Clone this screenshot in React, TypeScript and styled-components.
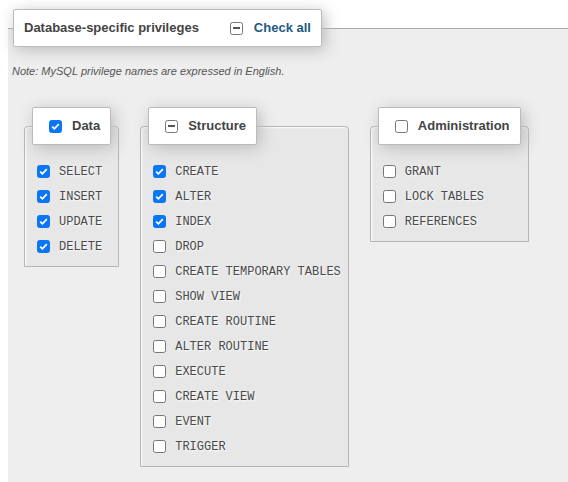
import React from "react";
import styled, { createGlobalStyle } from "styled-components";

type Mark = "on" | "off" | "mixed";

type Group = {
  title: string;
  mark: Mark;
  items: { name: string; on: boolean }[];
};

const groups: Group[] = [
  {
    title: "Data",
    mark: "on",
    items: ["SELECT", "INSERT", "UPDATE", "DELETE"].map((name) => ({ name, on: true })),
  },
  {
    title: "Structure",
    mark: "mixed",
    items: [
      "CREATE",
      "ALTER",
      "INDEX",
      "DROP",
      "CREATE TEMPORARY TABLES",
      "SHOW VIEW",
      "CREATE ROUTINE",
      "ALTER ROUTINE",
      "EXECUTE",
      "CREATE VIEW",
      "EVENT",
      "TRIGGER",
    ].map((name, i) => ({ name, on: i < 3 })),
  },
  {
    title: "Administration",
    mark: "off",
    items: ["GRANT", "LOCK TABLES", "REFERENCES"].map((name) => ({ name, on: false })),
  },
];

const GlobalStyle = createGlobalStyle`
  html, body {
    margin: 0;
    background: #fff;
    overflow: hidden;
  }
  body {
    font-family: "Liberation Sans", Arial, sans-serif;
  }
`;

const Check = ({ mark }: { mark: Mark }) => (
  <Box $mark={mark}>
    {mark === "on" && (
      <svg width="11" height="11" viewBox="0 0 11 11">
        <path d="M2.2 5.6 L4.4 7.8 L8.8 3.2" fill="none" stroke="#fff" strokeWidth="1.8" />
      </svg>
    )}
    {mark === "mixed" && <Dash />}
  </Box>
);

export default function App() {
  return (
    <>
      <GlobalStyle />
      <Outer>
        <Legend>
          <LegendTitle>Database-specific privileges</LegendTitle>
          <CheckAll>
            <Check mark="mixed" />
            <LinkText>Check all</LinkText>
          </CheckAll>
        </Legend>
        <Note>Note: MySQL privilege names are expressed in English.</Note>
        <Groups>
          {groups.map((g) => (
            <Inner key={g.title}>
              <Legend>
                <LegendLabel>
                  <Check mark={g.mark} />
                  <LegendTitle>{g.title}</LegendTitle>
                </LegendLabel>
              </Legend>
              <List>
                {g.items.map((it) => (
                  <Item key={it.name}>
                    <Check mark={it.on ? "on" : "off"} />
                    <Code>{it.name}</Code>
                  </Item>
                ))}
              </List>
            </Inner>
          ))}
        </Groups>
      </Outer>
    </>
  );
}

const Outer = styled.fieldset`
  margin: 9px 0 0 8px;
  padding: 0 0 0 5px;
  border: none;
  border-top: 1px solid #aaa;
  background: #eee;
  min-height: 480px;
  width: calc(100% - 8px);
  box-sizing: border-box;
`;

const Legend = styled.legend`
  padding: 10px 10px;
  line-height: 16px;
  background: #fff;
  border: 1px solid #bbb;
  border-radius: 2px;
  box-shadow: 3px 3px 15px #bbb;
  display: flex;
  align-items: center;
  white-space: nowrap;
`;

const LegendTitle = styled.span`
  font-size: 13px;
  font-weight: bold;
  color: #444;
`;

const CheckAll = styled.span`
  display: inline-flex;
  align-items: center;
  gap: 11px;
  margin-left: 31px;
`;

const LinkText = styled.span`
  font-size: 13px;
  font-weight: bold;
  color: #235a81;
`;

const LegendLabel = styled.span`
  display: inline-flex;
  align-items: center;
  gap: 10px;
  margin-left: 6px;
`;

const Note = styled.p`
  margin: 18px 0 0 -1px;
  font-size: 11px;
  line-height: 13px;
  font-style: italic;
  color: #555;
`;

const Groups = styled.div`
  display: flex;
  align-items: flex-start;
  gap: 21px;
  margin: 29px 0 0 11px;
`;

const Inner = styled.fieldset`
  margin: 0;
  padding: 7px;
  border: 1px solid #b5b5b5;
  border-radius: 4px 4px 0 0;
  background: #e7e7e7;
  box-shadow: 1px 1px 2px #fff inset;
`;

const List = styled.ul`
  list-style: none;
  margin: 0;
  padding: 7px 0 0 5px;
`;

const Item = styled.li`
  display: flex;
  align-items: center;
  gap: 9px;
  height: 25px;
`;

const Code = styled.span`
  font-family: "Liberation Mono", "DejaVu Sans Mono", monospace;
  font-size: 12px;
  color: #4a4a4a;
  text-shadow: 1px 1px 2px #fff;
  white-space: nowrap;
`;

const Box = styled.span<{ $mark: Mark }>`
  box-sizing: border-box;
  width: 13px;
  height: 13px;
  flex: none;
  border-radius: 2.5px;
  display: inline-flex;
  align-items: center;
  justify-content: center;
  background: ${(p) => (p.$mark === "on" ? "#0a75f5" : "#fff")};
  border: 1px solid ${(p) => (p.$mark === "on" ? "#0a75f5" : "#767676")};
`;

const Dash = styled.span`
  width: 7px;
  height: 1.5px;
  background: #555;
`;
